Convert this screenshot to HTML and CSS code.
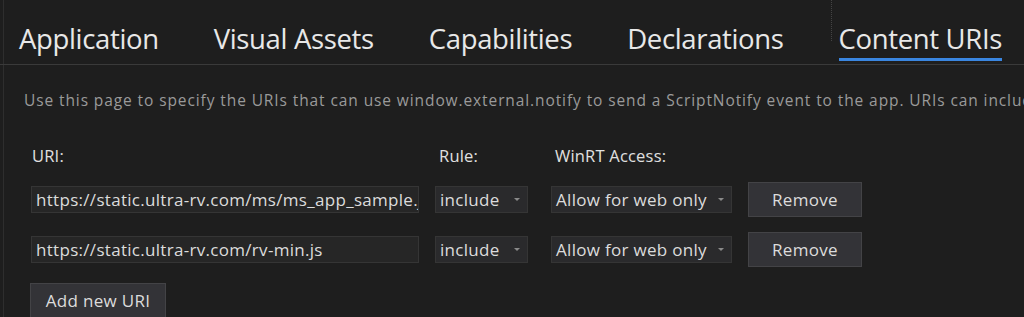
FILE: index.html
```html
<!DOCTYPE html>
<html lang="en">
<head>
    <meta charset="UTF-8">
    <title>Content URIs</title>
    <link rel="stylesheet" href="styles.css">
</head>
<body>

<div class="page">
    <div class="tabs">
        <div class="tab">Application</div>
        <div class="tab">Visual Assets</div>
        <div class="tab">Capabilities</div>
        <div class="tab">Declarations</div>
        <div class="tab active">Content URIs</div>
    </div>

    <p class="desc">Use this page to specify the URIs that can use window.external.notify to send a ScriptNotify event to the app. URIs can include wildcards.</p>

    <div class="uri-list">
        <div class="row labels">
            <span class="col-uri">URI:</span>
            <span class="col-rule">Rule:</span>
            <span class="col-access">WinRT Access:</span>
        </div>

        <div class="row">
            <div class="field col-uri">https://static.ultra-rv.com/ms/ms_app_sample.js</div>
            <div class="select col-rule">include <span class="arrow"></span></div>
            <div class="select col-access">Allow for web only <span class="arrow"></span></div>
            <button class="btn remove">Remove</button>
        </div>

        <div class="row">
            <div class="field col-uri">https://static.ultra-rv.com/rv-min.js</div>
            <div class="select col-rule">include <span class="arrow"></span></div>
            <div class="select col-access">Allow for web only <span class="arrow"></span></div>
            <button class="btn remove">Remove</button>
        </div>

        <button class="btn add">Add new URI</button>
    </div>
</div>

</body>
</html>
```

FILE: styles.css
```css
body {
    margin: 0;
    background-color: #1e1e1e;
    font-family: "Open Sans", "Noto Sans", sans-serif;
    color: #dcdcdc;
    overflow: hidden;
}
.page {
    height: 317px;
    border-left: 1px solid #2e2e2e;
    margin-left: 3px;
}
.tabs {
    display: flex;
    height: 64px;
    border-bottom: 1px solid #3a3a3a;
    margin-left: -4px;
    padding-left: 19px;
}
.tab {
    font-size: 27.5px;
    line-height: 36px;
    padding-top: 21px;
    margin-right: 55px;
    white-space: nowrap;
    letter-spacing: -0.35px;
    color: #e8e8e8;
}
.tab.active {
    position: relative;
}
.tab.active::after {
    content: "";
    position: absolute;
    left: 0;
    right: 0;
    top: 58px;
    height: 3px;
    background-color: #3a86e0;
}
.tab.active::before {
    content: "";
    position: absolute;
    left: -8px;
    top: -21px;
    height: 62px;
    border-left: 1px dotted #444;
}
.desc {
    margin: 25px 0 0 20px;
    font-size: 15.5px;
    line-height: 20px;
    color: #9a9a9a;
    white-space: nowrap;
    letter-spacing: 0.9px;
}
.uri-list {
    padding-left: 27px;
    padding-top: 36px;
}
.row {
    display: flex;
    align-items: center;
    height: 50px;
}
.row.labels {
    height: 20px;
    line-height: 20px;
    margin-bottom: 8px;
    font-size: 16.5px;
    color: #e0e0e0;
    letter-spacing: 0.2px;
}
.col-uri {
    width: 388px;
    margin-right: 16px;
}
.col-rule {
    width: 93px;
    margin-right: 23px;
}
.col-access {
    width: 181px;
    margin-right: 16px;
}
.labels .col-uri {
    width: 391px;
    margin-left: 1px;
}
.field, .select {
    box-sizing: border-box;
    height: 27px;
    line-height: 25px;
    font-size: 17px;
    letter-spacing: 0.3px;
    color: #dcdcdc;
    background-color: #262626;
    border: 1px solid #353535;
    padding: 0 4px;
    white-space: nowrap;
    overflow: hidden;
}
.select {
    position: relative;
    background-color: #2a2a2c;
}
.arrow {
    position: absolute;
    right: 7px;
    top: 11px;
    border-left: 3px solid transparent;
    border-right: 3px solid transparent;
    border-top: 3px solid #8a8a8a;
}
.btn {
    box-sizing: border-box;
    font-family: "Open Sans", "Noto Sans", sans-serif;
    font-size: 17px;
    letter-spacing: 0.3px;
    color: #dcdcdc;
    background-color: #333337;
    border: 1px solid #434346;
    padding: 0;
    height: 35px;
}
.remove {
    width: 114px;
}
.add {
    width: 136px;
    margin-top: 9px;
    margin-left: -1px;
}
```
